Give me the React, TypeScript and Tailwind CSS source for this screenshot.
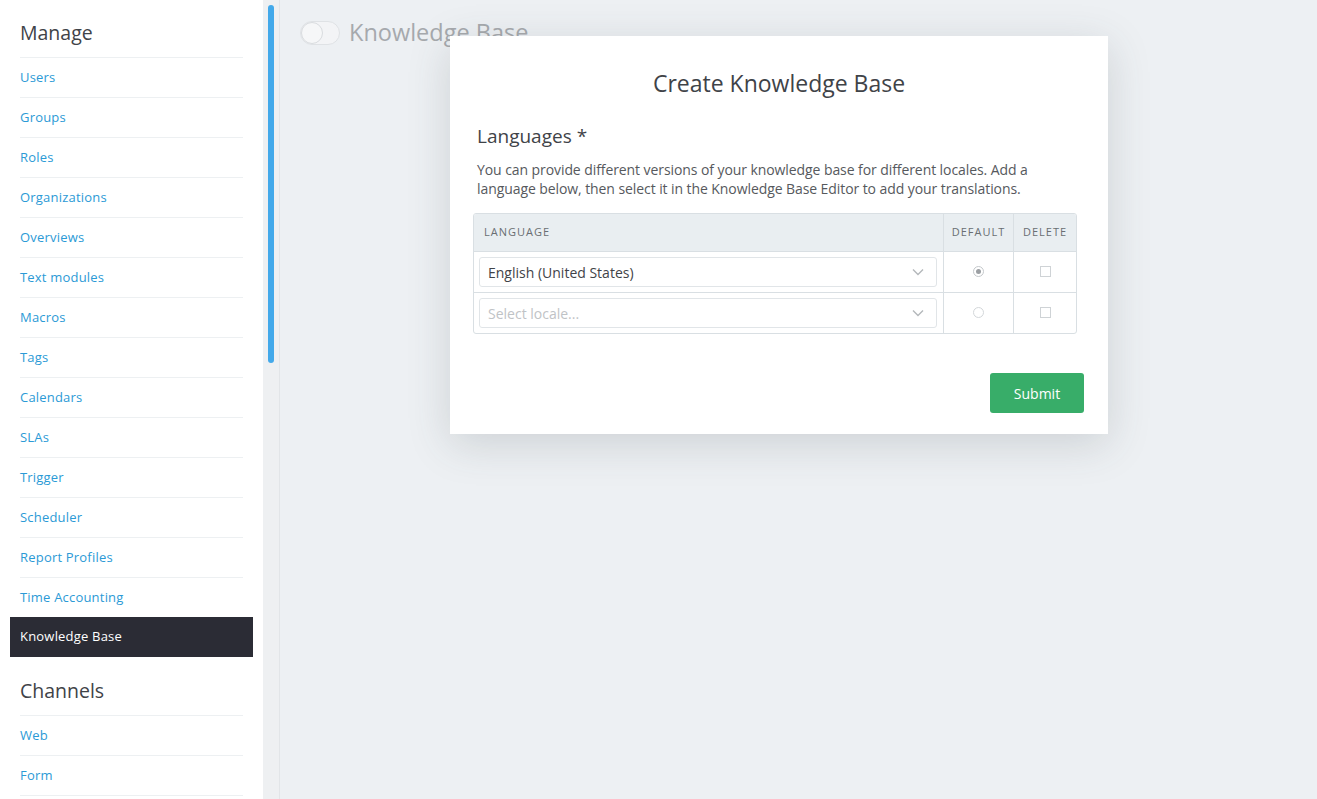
import React from 'react';

const manageItems = [
  'Users',
  'Groups',
  'Roles',
  'Organizations',
  'Overviews',
  'Text modules',
  'Macros',
  'Tags',
  'Calendars',
  'SLAs',
  'Trigger',
  'Scheduler',
  'Report Profiles',
  'Time Accounting',
  'Knowledge Base',
];

const channelItems = ['Web', 'Form'];

const Chevron = () => (
  <svg width="12" height="8" viewBox="0 0 12 8" fill="none" stroke="#b4b8bb" strokeWidth="1.4">
    <path d="M1 1.5l5 5 5-5" />
  </svg>
);

const LocaleSelect = ({ value, placeholder }: { value?: string; placeholder?: string }) => (
  <div className="flex h-[30px] w-[458px] items-center justify-between rounded-[3px] border border-[#e1e5e8] bg-white pl-[8px] pr-[12px]">
    <span className={value ? 'text-[14px] text-[#3f4348]' : 'text-[14px] text-[#bfc3c6]'}>
      {value || placeholder}
    </span>
    <Chevron />
  </div>
);

const App: React.FC = () => {
  return (
    <div
      className="relative flex h-[799px] w-[1317px] overflow-hidden bg-[#edf0f3]"
      style={{ fontFamily: '"Open Sans", "Noto Sans", sans-serif' }}
    >
      {/* Sidebar */}
      <div className="h-full w-[263px] shrink-0 overflow-hidden bg-white pl-[20px] pr-[20px]">
        <h2 className="pb-[11px] pt-[19px] text-[19.5px] leading-[27px] text-[#3f4348]">Manage</h2>
        {manageItems.map((item) =>
          item === 'Knowledge Base' ? (
            <div
              key={item}
              className="-mx-[10px] flex h-[40px] items-center bg-[#2b2c35] px-[10px] text-[13px] tracking-[0.2px] text-white"
            >
              {item}
            </div>
          ) : (
            <div
              key={item}
              className="flex h-[40px] items-center border-t border-[#edf0f2] text-[13px] tracking-[0.2px] text-[#2b9ad6]"
            >
              {item}
            </div>
          )
        )}
        <h2 className="pb-[11px] pt-[20px] text-[19.5px] leading-[27px] text-[#3f4348]">Channels</h2>
        {channelItems.map((item) => (
          <div
            key={item}
            className="flex h-[40px] items-center border-t border-[#edf0f2] text-[13px] tracking-[0.2px] text-[#2b9ad6]"
          >
            {item}
          </div>
        ))}
        <div className="border-t border-[#edf0f2]" />
      </div>

      {/* Scrollbar strip */}
      <div className="h-full w-[17px] shrink-0 border-r border-[#e2e5e8] bg-[#eef0f2] pl-[5px] pt-[5px]">
        <div className="h-[358px] w-[6px] rounded-full bg-[#43a9ea]" />
      </div>

      {/* Main content */}
      <div className="flex-1 pl-[20px] pt-[21px]">
        <div className="flex items-center gap-[9px]">
          <div className="relative h-[24px] w-[40px] rounded-full border border-[#dfe2e5] bg-[#f3f4f6]">
            <div className="absolute left-0 top-0 h-[22px] w-[22px] rounded-full border border-[#d9dcdf] bg-[#f6f7f8]" />
          </div>
          <h1 className="-mt-[2px] text-[23.5px] leading-[26px] text-[#a6a9ad]">Knowledge Base</h1>
        </div>
      </div>

      {/* Modal */}
      <div className="absolute left-[450px] top-[36px] w-[658px] bg-white px-[27px] pb-[21px] pt-[32px] shadow-[0_10px_40px_rgba(60,70,80,0.18)]">
        <h3 className="text-center text-[23px] leading-[30px] text-[#3f4348]">Create Knowledge Base</h3>
        <div className="mt-[24px] text-[19px] leading-[28px] text-[#3f4348]">Languages *</div>
        <p className="mt-[10px] text-[14px] leading-[19px] tracking-[-0.08px] text-[#56595d]">
          You can provide different versions of your knowledge base for different locales. Add a language below, then
          select it in the Knowledge Base Editor to add your translations.
        </p>

        <div className="-ml-[4px] mt-[15px] w-[604px] overflow-hidden rounded-[3px] border border-[#d9dfe3]">
          <div className="flex h-[37px] bg-[#e9eef1] text-[11px] uppercase tracking-[1px] text-[#6a6e73]">
            <div className="flex flex-1 items-center pl-[10px]">Language</div>
            <div className="flex w-[70px] items-center justify-center border-l border-[#d9dfe3]">Default</div>
            <div className="flex w-[63px] items-center justify-center border-l border-[#d9dfe3]">Delete</div>
          </div>
          <div className="flex h-[41px] border-t border-[#d9dfe3]">
            <div className="flex flex-1 items-center pl-[5px]">
              <LocaleSelect value="English (United States)" />
            </div>
            <div className="flex w-[70px] items-center justify-center border-l border-[#d9dfe3]">
              <div className="-mt-[2px] flex h-[11px] w-[11px] items-center justify-center rounded-full border border-[#c4c8cb]">
                <div className="h-[5px] w-[5px] rounded-full bg-[#9b9fa3]" />
              </div>
            </div>
            <div className="flex w-[63px] items-center justify-center border-l border-[#d9dfe3]">
              <div className="-mt-[2px] h-[11px] w-[11px] border border-[#cfd3d6]" />
            </div>
          </div>
          <div className="flex h-[41px] border-t border-[#d9dfe3]">
            <div className="flex flex-1 items-center pl-[5px]">
              <LocaleSelect placeholder="Select locale..." />
            </div>
            <div className="flex w-[70px] items-center justify-center border-l border-[#d9dfe3]">
              <div className="-mt-[2px] h-[11px] w-[11px] rounded-full border border-[#d3d7da]" />
            </div>
            <div className="flex w-[63px] items-center justify-center border-l border-[#d9dfe3]">
              <div className="-mt-[2px] h-[11px] w-[11px] border border-[#cfd3d6]" />
            </div>
          </div>
        </div>

        <div className="mt-[39px] flex justify-end">
          <button className="-mr-[3px] h-[40px] w-[94px] rounded-[3px] bg-[#38ad69] text-[14px] text-white">
            Submit
          </button>
        </div>
      </div>
    </div>
  );
};

export default App;
